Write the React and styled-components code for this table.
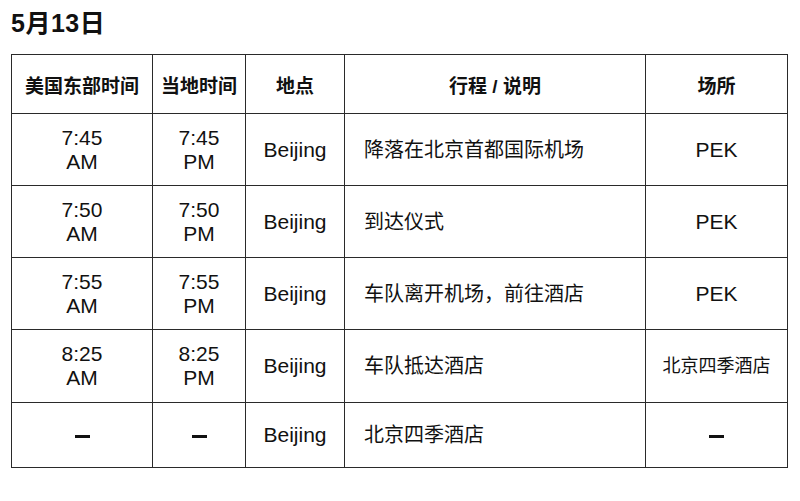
import React from "react";
import styled, { createGlobalStyle } from "styled-components";

const Global = createGlobalStyle`
  html, body { margin: 0; padding: 0; background: #fff; }
  body { font-family: "Liberation Sans", "Noto Sans CJK SC", sans-serif; color: #111; }
`;

const Page = styled.div`
  width: 800px;
  height: 501px;
  padding: 9px 0 0 11px;
  box-sizing: border-box;
  background: #fff;
`;

const Title = styled.h1`
  margin: 0 0 16px 0;
  font-size: 25px;
  line-height: 29px;
  font-weight: 700;
  letter-spacing: 0.5px;
`;

const Table = styled.table`
  width: 776px;
  border-collapse: collapse;
  table-layout: fixed;
  border: 1.5px solid #2a2a2a;
`;

const Head = styled.th`
  height: 58px;
  padding: 0;
  border: 1.5px solid #2a2a2a;
  font-size: 19px;
  font-weight: 700;
  text-align: center;
  vertical-align: middle;
`;

const Cell = styled.td`
  height: ${(p) => p.$h}px;
  padding: ${(p) => (p.$left ? "0 0 0 19px" : "0")};
  border: 1.5px solid #2a2a2a;
  font-size: ${(p) => p.$size || 21}px;
  line-height: 24px;
  text-align: ${(p) => (p.$left ? "left" : "center")};
  vertical-align: middle;
`;

const Dash = styled.span`
  display: inline-block;
  width: 15px;
  height: 3px;
  background: #111;
  vertical-align: middle;
`;

const rows = [
  { us: ["7:45", "AM"], local: ["7:45", "PM"], desc: "降落在北京首都国际机场", venue: "PEK", h: 71 },
  { us: ["7:50", "AM"], local: ["7:50", "PM"], desc: "到达仪式", venue: "PEK", h: 71 },
  { us: ["7:55", "AM"], local: ["7:55", "PM"], desc: "车队离开机场，前往酒店", venue: "PEK", h: 71 },
  { us: ["8:25", "AM"], local: ["8:25", "PM"], desc: "车队抵达酒店", venue: "北京四季酒店", h: 72 },
  { us: null, local: null, desc: "北京四季酒店", venue: null, h: 64 },
];

const Time = ({ t }) =>
  t ? (
    <>
      {t[0]}
      <br />
      {t[1]}
    </>
  ) : (
    <Dash />
  );

export default function App() {
  return (
    <Page>
      <Global />
      <Title>5月13日</Title>
      <Table>
        <colgroup>
          <col style={{ width: 141 }} />
          <col style={{ width: 93 }} />
          <col style={{ width: 99 }} />
          <col style={{ width: 301 }} />
          <col style={{ width: 142 }} />
        </colgroup>
        <thead>
          <tr>
            <Head>美国东部时间</Head>
            <Head>当地时间</Head>
            <Head>地点</Head>
            <Head>行程 / 说明</Head>
            <Head>场所</Head>
          </tr>
        </thead>
        <tbody>
          {rows.map((r, i) => (
            <tr key={i}>
              <Cell $h={r.h}><Time t={r.us} /></Cell>
              <Cell $h={r.h}><Time t={r.local} /></Cell>
              <Cell $h={r.h}>Beijing</Cell>
              <Cell $h={r.h} $left $size={20}>{r.desc}</Cell>
              <Cell $h={r.h} $size={r.venue === "PEK" ? 21 : 18}>
                {r.venue ? r.venue : <Dash />}
              </Cell>
            </tr>
          ))}
        </tbody>
      </Table>
    </Page>
  );
}
